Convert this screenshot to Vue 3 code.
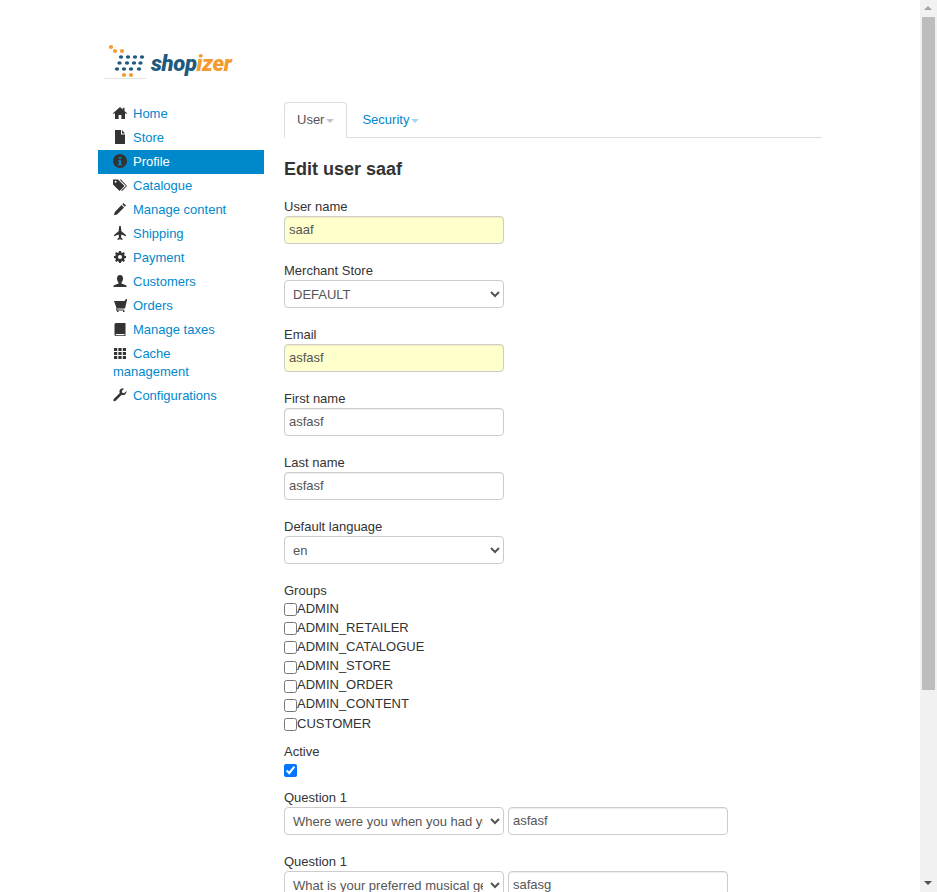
<script setup>
import { ref } from 'vue'

const icons = {
  home: 'M7 1 0 7.2l.8.9L2 7.100V13h3.600V9h2.800v4H12V7.100l1.200 1 .8-.9L11.500 5V1.800H9.800v1.700L7 1z',
  file: 'M2 0h6v4.500h4V14H2V0zm7 0 3 3.500H9V0z',
  info: 'M7 0a7 7 0 1 0 0 14A7 7 0 0 0 7 0zM6 3h2v2H6V3zM5 6.200h3V10h1v1.200H5V10h1V7.400H5V6.200z',
  tags: 'M0 1.500h5L11.500 8 6.500 13 0 6.500v-5zm2.600 1.300a1 1 0 1 0 0 2 1 1 0 0 0 0-2zM6.500 1.500H8L14 8l-5 5-.8-.8L13 8 6.500 1.500z',
  pencil: 'M10.500 1 13 3.500 11.800 4.700 9.300 2.200 10.500 1zM8.500 3 11 5.500 4 12.500 1 13.200l.7-3L8.500 3z',
  plane: 'M6.200 0h1.600L8.400 5.200 13 9v1.200L8.400 8.500 8 11.500l1.500 1.300V14L7 13.200 4.500 14v-1.200L6 11.500 5.600 8.500 1 10.200V9l4.600-3.800L6.200 0z',
  cog: 'M6 1h2l.3 1.500 1 .4 1.300-.8 1.300 1.300-.8 1.300.4 1 1.500.3v2l-1.500.3-.4 1 .8 1.300-1.300 1.300-1.300-.8-1 .4L8 13H6l-.3-1.500-1-.4-1.300.8-1.300-1.300.8-1.300-.4-1L1 8V6l1.500-.3.4-1-.8-1.300 1.300-1.300 1.300.8 1-.4L6 1zm1 4a2 2 0 1 0 0 4 2 2 0 0 0 0-4z',
  user: 'M7 1c2 0 3 1.500 3 3.500S9 8 8.500 8.500V9.500l5 2V13H.5v-1.500l5-2V8.500C5 8 4 6.500 4 4.500S5 1 7 1z',
  cart: 'M1 3h10.500L13 1h1v1l-2 8.500H4.500l-.3 1H11v1H3L3.500 10 1 3zM4 12.200h1.500V14H4v-1.800zm6 0h1.500V14H10v-1.800z',
  book: 'M3 1h9.500v13H3a1.500 1.500 0 0 1-1.500-1.500v-10A1.500 1.500 0 0 1 3 1zm.3 11a.6.6 0 0 0 0 1.200h8.200V12H3.300z',
  th: 'M1 2h3.200v3H1V2zm4.400 0h3.200v3H5.400V2zm4.400 0H13v3H9.800V2zM1 6h3.200v3H1V6zm4.400 0h3.200v3H5.400V6zm4.400 0H13v3H9.800V6zM1 10h3.200v3H1v-3zm4.400 0h3.200v3H5.400v-3zm4.400 0H13v3H9.800v-3z',
  wrench: 'M13.500 3 11 5.200 9.200 4.800 8.800 3 11 .7C9.500 0 7.800.5 7 1.700 6.300 2.800 6.300 4 6.800 5L.8 11c-.6.600-.6 1.400 0 1.900.5.500 1.300.5 1.900-.1l6-6c1 .5 2.300.4 3.300-.4 1.200-1 1.700-2.500 1.500-3.400z'
}

const nav = [
  { name: 'Home', icon: 'home' },
  { name: 'Store', icon: 'file' },
  { name: 'Profile', icon: 'info', active: true },
  { name: 'Catalogue', icon: 'tags' },
  { name: 'Manage content', icon: 'pencil' },
  { name: 'Shipping', icon: 'plane' },
  { name: 'Payment', icon: 'cog' },
  { name: 'Customers', icon: 'user' },
  { name: 'Orders', icon: 'cart' },
  { name: 'Manage taxes', icon: 'book' },
  { name: 'Cache management', icon: 'th' },
  { name: 'Configurations', icon: 'wrench' }
]

const groups = ['ADMIN', 'ADMIN_RETAILER', 'ADMIN_CATALOGUE', 'ADMIN_STORE', 'ADMIN_ORDER', 'ADMIN_CONTENT', 'CUSTOMER']

const topFields = [
  { label: 'User name', value: 'saaf', required: true },
  { label: 'Merchant Store', options: ['DEFAULT'] },
  { label: 'Email', value: 'asfasf', required: true },
  { label: 'First name', value: 'asfasf' },
  { label: 'Last name', value: 'asfasf' },
  { label: 'Default language', options: ['en'] }
]

const questions = [
  { text: 'Where were you when you had your first kiss?', answer: 'asfasf' },
  { text: 'What is your preferred musical genre?', answer: 'safasg' }
]

const orangeDots = [[9, 7], [13, 11], [20, 11], [22, 35], [29, 35]]
const blueDots = [
  [19, 17], [26, 17], [33, 17], [40, 17],
  [17.5, 23], [25, 23], [32, 23], [38.5, 23],
  [15, 29], [22, 29], [29, 29], [37, 29]
]

const active = ref(true)
</script>

<template>
  <div class="page">
    <div class="wrap">
      <div class="logo">
        <svg class="logo-mark" width="46" height="42" viewBox="0 0 46 42">
          <circle v-for="d in orangeDots" :key="d.join()" :cx="d[0]" :cy="d[1]" r="2.100" fill="#f29c30" />
          <ellipse v-for="d in blueDots" :key="d.join()" :cx="d[0]" :cy="d[1]" rx="2.200" ry="1.800" fill="#1e5a7e" />
          <rect x="2" y="38" width="42" height="1" fill="#e4e7ea" />
        </svg>
        <span class="logo-text">shop<span class="logo-accent">izer</span></span>
      </div>
      <div class="columns">
        <ul class="side">
          <li v-for="item in nav" :key="item.name" :class="{ on: item.active }">
            <a href="#">
              <svg class="ico" width="14" height="14" viewBox="0 0 14 14"><path fill-rule="evenodd" :d="icons[item.icon]" /></svg>{{ item.name }}
            </a>
          </li>
        </ul>
        <div class="main">
          <div class="tabs">
            <a href="#" class="tab current">User<b class="caret"></b></a>
            <a href="#" class="tab">Security<b class="caret"></b></a>
          </div>
          <h3>Edit user saaf</h3>
          <div v-for="f in topFields" :key="f.label" class="field">
            <label>{{ f.label }}</label>
            <select v-if="f.options" class="ctl">
              <option v-for="o in f.options" :key="o">{{ o }}</option>
            </select>
            <input v-else class="ctl" :class="{ req: f.required }" type="text" :value="f.value">
          </div>
          <div class="checks">
            <label>Groups</label>
            <div v-for="g in groups" :key="g" class="check"><input type="checkbox">{{ g }}</div>
          </div>
          <div class="active-row">
            <label>Active</label>
            <input v-model="active" type="checkbox">
          </div>
          <div v-for="q in questions" :key="q.answer" class="field">
            <label>Question 1</label>
            <div class="pair">
              <select class="ctl"><option>{{ q.text }}</option></select>
              <input class="ctl" type="text" :value="q.answer">
            </div>
          </div>
        </div>
      </div>
    </div>
    <div class="scrollbar">
      <div class="arrow up"></div>
      <div class="thumb"></div>
      <div class="arrow down"></div>
    </div>
  </div>
</template>

<style>
html, body {
  margin: 0;
  height: 100%;
  overflow: hidden;
  background: #fff;
}
</style>

<style scoped>
.page {
  position: relative;
  height: 892px;
  overflow: hidden;
  font-family: "Liberation Sans", Arial, sans-serif;
  font-size: 13px;
  line-height: 18px;
  color: #333;
}

.wrap {
  padding: 40px 0 0 98px;
}

.logo {
  display: flex;
  align-items: flex-start;
  height: 62px;
}

.logo-mark {
  margin-left: 4px;
}

.logo-text {
  font-family: Roboto, sans-serif;
  font-weight: 900;
  font-style: italic;
  font-size: 22px;
  line-height: 30px;
  letter-spacing: -0.35px;
  color: #1e5a7e;
  margin: 9px 0 0 3px;
}

.logo-accent {
  color: #f29c30;
}

.columns {
  display: flex;
  gap: 20px;
  align-items: flex-start;
}

.side {
  width: 166px;
  margin: 0;
  padding: 0;
  list-style: none;
}

.side a {
  display: block;
  padding: 3px 15px;
  color: #0088cc;
  text-decoration: none;
}

.side .on a {
  background: #0088cc;
  color: #fff;
}

.ico {
  fill: #333;
  margin-right: 6px;
  vertical-align: -2px;
}

.main {
  width: 538px;
}

.tabs {
  display: flex;
  height: 35px;
  border-bottom: 1px solid #ddd;
}

.tab {
  padding: 8px 12px;
  margin-right: 2px;
  height: 35px;
  box-sizing: border-box;
  border: 1px solid transparent;
  border-radius: 4px 4px 0 0;
  color: #0088cc;
  text-decoration: none;
}

.tab.current {
  color: #555;
  background: #fff;
  border-color: #ddd #ddd transparent;
  height: 36px;
}

.caret {
  display: inline-block;
  width: 0;
  height: 0;
  margin-left: 2px;
  vertical-align: middle;
  border-top: 4px solid #0088cc;
  border-left: 4px solid transparent;
  border-right: 4px solid transparent;
  opacity: 0.35;
}

.tab.current .caret {
  border-top-color: #555;
}

h3 {
  margin: 0;
  padding: 19px 0 15px;
  font-size: 18px;
  line-height: 24px;
  font-weight: bold;
  color: #333;
}

label {
  display: block;
  height: 20px;
  padding-top: 2px;
  box-sizing: border-box;
  line-height: 18px;
}

.field {
  margin-bottom: 16px;
}

.ctl {
  display: block;
  box-sizing: border-box;
  width: 220px;
  height: 28px;
  padding: 3px 4px 5px;
  margin: 0;
  border: 1px solid #ccc;
  border-radius: 4px;
  background: #fff;
  color: #555;
  font: inherit;
  box-shadow: inset 0 1px 1px rgba(0, 0, 0, 0.075);
}

.ctl.req {
  background: #ffffcc;
}

select.ctl {
  padding: 4px;
  box-shadow: none;
}

.pair {
  display: flex;
  gap: 4px;
}

.checks {
  margin-bottom: 8px;
}

.checks label {
  margin-bottom: -1px;
}

.check {
  display: flex;
  align-items: center;
  height: 19.17px;
}

.check input {
  margin: 2px 0 0;
  width: 13px;
  height: 13px;
}

.active-row {
  margin-bottom: 8px;
  height: 38px;
}

.active-row input {
  display: block;
  margin: 3px 0 0;
  width: 13px;
  height: 13px;
}

.scrollbar {
  position: absolute;
  top: 0;
  right: 0;
  width: 17px;
  height: 892px;
  background: #f1f1f1;
  display: flex;
  flex-direction: column;
}

.arrow {
  height: 17px;
  flex: none;
  position: relative;
}

.arrow::after {
  content: "";
  position: absolute;
  left: 4px;
  width: 0;
  height: 0;
  border-left: 4px solid transparent;
  border-right: 4px solid transparent;
}

.arrow.up::after {
  top: 6px;
  border-bottom: 4px solid #a3a3a3;
}

.arrow.down {
  margin-top: auto;
}

.arrow.down::after {
  top: 6px;
  border-top: 4px solid #505050;
}

.thumb {
  height: 673px;
  width: 13px;
  margin-left: 2px;
  background: #bdbdbd;
}
</style>
